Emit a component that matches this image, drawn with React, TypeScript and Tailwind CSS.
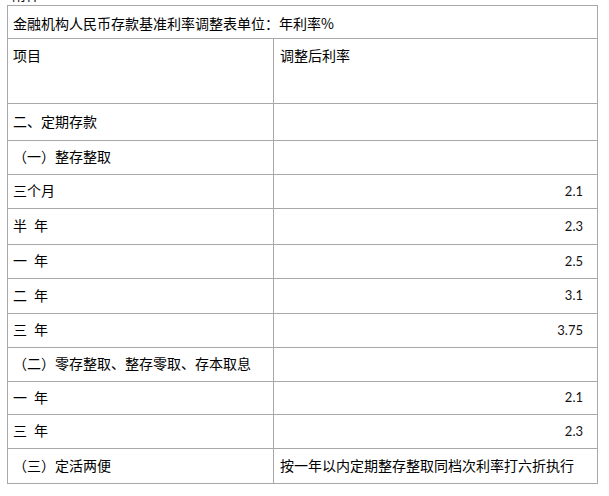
const rows: { label: string; value?: string; h: string }[] = [
  { label: "二、定期存款", h: "h-[37px]" },
  { label: "（一）整存整取", h: "h-[34px]" },
  { label: "三个月", value: "2.1", h: "h-[34px]" },
  { label: "半\u2002年", value: "2.3", h: "h-[36px]" },
  { label: "一\u2002年", value: "2.5", h: "h-[34px]" },
  { label: "二\u2002年", value: "3.1", h: "h-[35px]" },
  { label: "三\u2002年", value: "3.75", h: "h-[34px]" },
  { label: "（二）零存整取、整存零取、存本取息", h: "h-[34px]" },
  { label: "一\u2002年", value: "2.1", h: "h-[33px]" },
  { label: "三\u2002年", value: "2.3", h: "h-[34px]" },
];

export default function App() {
  return (
    <div className="min-h-[496px] w-[609px] bg-white text-[14px] text-black [font-family:'Noto_Sans_CJK_SC','Noto_Sans',sans-serif]">
      <div className="h-[5px] overflow-hidden pl-[12px]">
        <div className="-mt-[14px] leading-[16px]">附件</div>
      </div>
      <div className="ml-[7px] w-[591px] border border-[#a8a8a8]">
        <div className="flex h-[33px] items-center border-b border-[#a8a8a8] pl-[5px] pt-[2px]">
          金融机构人民币存款基准利率调整表单位：年利率%
        </div>
        <div className="flex h-[65px] border-b border-[#a8a8a8]">
          <div className="w-[266px] border-r border-[#a8a8a8] pl-[5px] pt-[6px]">项目</div>
          <div className="flex-1 pl-[6px] pt-[6px]">调整后利率</div>
        </div>
        {rows.map((r, i) => (
          <div key={i} className={`flex border-b border-[#a8a8a8] ${r.h}`}>
            <div className="flex w-[266px] items-center border-r border-[#a8a8a8] pb-[2px] pl-[5px]">{r.label}</div>
            <div className="flex flex-1 items-center justify-end pr-[14px] text-[13px] text-[#141414] [font-family:Lato,'Open_Sans',sans-serif]">
              {r.value}
            </div>
          </div>
        ))}
        <div className="flex h-[34px]">
          <div className="flex w-[266px] items-center border-r border-[#a8a8a8] pb-[2px] pl-[5px]">（三）定活两便</div>
          <div className="flex flex-1 items-center pb-[2px] pl-[6px]">按一年以内定期整存整取同档次利率打六折执行</div>
        </div>
      </div>
    </div>
  );
}
